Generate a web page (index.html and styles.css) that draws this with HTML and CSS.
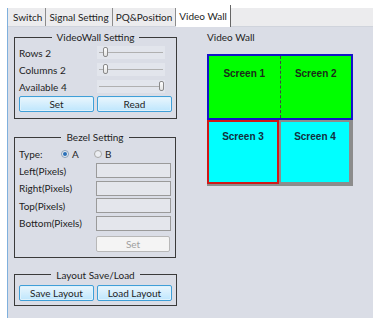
FILE: index.html
```html
<!DOCTYPE html>
<html>
<head>
<meta charset="utf-8">
<link rel="stylesheet" href="styles.css">
</head>
<body>
<div class="window">
  <div class="tabs">
    <div class="tab">Switch</div>
    <div class="tab">Signal Setting</div>
    <div class="tab">PQ&amp;Position</div>
    <div class="tab active">Video Wall</div>
  </div>
  <div class="panel">
    <div class="left">
      <fieldset class="group g1">
        <legend>VideoWall Setting</legend>
        <div class="srow"><span class="lbl">Rows 2</span><div class="slider"><div class="track"></div><div class="thumb" style="left:6px"></div></div></div>
        <div class="srow"><span class="lbl">Columns 2</span><div class="slider"><div class="track"></div><div class="thumb" style="left:6px"></div></div></div>
        <div class="srow"><span class="lbl">Available 4</span><div class="slider"><div class="track"></div><div class="thumb" style="left:62px"></div></div></div>
        <div class="btns"><button class="btn">Set</button><button class="btn">Read</button></div>
      </fieldset>
      <fieldset class="group g2">
        <legend>Bezel Setting</legend>
        <div class="typerow"><span class="tlbl">Type:</span><span class="radio on"></span><span class="rlbl">A</span><span class="radio"></span><span class="rlbl">B</span></div>
        <div class="frow"><span class="flbl">Left(Pixels)</span><span class="input"></span></div>
        <div class="frow"><span class="flbl">Right(Pixels)</span><span class="input"></span></div>
        <div class="frow"><span class="flbl">Top(Pixels)</span><span class="input"></span></div>
        <div class="frow"><span class="flbl">Bottom(Pixels)</span><span class="input"></span></div>
        <div class="frow setrow"><span class="flbl"></span><button class="btn disabled">Set</button></div>
      </fieldset>
      <fieldset class="group g3">
        <legend>Layout Save/Load</legend>
        <div class="btns"><button class="btn">Save Layout</button><button class="btn">Load Layout</button></div>
      </fieldset>
    </div>
    <div class="right">
      <div class="vwtitle">Video Wall</div>
      <div class="wall">
        <div class="rowtop">
          <div class="scr">Screen 1</div>
          <div class="divider"></div>
          <div class="scr">Screen 2</div>
        </div>
        <div class="rowbot">
          <div class="cell sel">Screen 3</div>
          <div class="cell">Screen 4</div>
        </div>
      </div>
    </div>
  </div>
</div>
</body>
</html>
```
FILE: styles.css
```css
html, body { margin: 0; padding: 0; background: #ffffff; }
body { font-family: Lato, "Open Sans", sans-serif; font-size: 10px; color: #1e1e1e; }
.window { margin: 8px 0 0 7px; width: 366px; height: 310px; border-left: 1px solid #7fb0dd; box-sizing: border-box; display: flex; flex-direction: column; }
.tabs { height: 18px; background: #ececee; display: flex; align-items: stretch; padding-left: 2px; border-bottom: 1px solid #d0d4dc; }
.tab { padding: 0 3px; line-height: 18px; border-right: 1px solid #8c8c8c; color: #1e1e1e; }
.tab.active { background: #ffffff; margin-top: -3px; line-height: 22px; height: 22px; border-right: 1px solid #666; }
.panel { flex: 1; background: #dadde6; display: flex; padding: 4px 0 0 6px; }
.left { width: 162px; display: flex; flex-direction: column; }
.group { margin: 0; border: 1px solid #3a3a3a; padding: 0 4px 4px 4px; }
.group legend { margin: 0 auto; padding: 0 5px; line-height: 12px; color: #1e1e1e; text-align: center; }
.g1 { height: 88px; box-sizing: border-box; padding-top: 1px; }
.g2 { margin-top: 12px; padding-bottom: 4px; }
.g3 { margin-top: 11px; padding-top: 3px; padding-bottom: 4px; }
.srow { display: flex; align-items: center; height: 17px; }
.lbl { width: 78px; }
.slider { position: relative; width: 68px; height: 13px; background: #e2e5ec; }
.track { position: absolute; left: 2px; right: 2px; top: 6px; height: 1px; background: #b0b0b0; }
.thumb { position: absolute; top: 1px; width: 5px; height: 10px; border: 1px solid #8a8a8a; border-radius: 2px; background: linear-gradient(#ffffff, #e2e2e2); box-sizing: border-box; }
.btns { display: flex; gap: 3px; margin-top: 1px; }
.btn { font-family: Lato, "Open Sans", sans-serif; font-size: 10px; color: #1e1e1e; width: 75px; height: 16px; padding: 0; border: 1px solid #3f9fd8; border-radius: 2px; background: linear-gradient(#eaf6fd, #bee6fd); box-shadow: inset 0 0 0 1px #dff2fc; }
.btn.disabled { border-color: #b8b8b8; background: #f4f4f4; color: #a0a0a0; box-shadow: none; width: 74px; height: 16px; }
.typerow { display: flex; align-items: center; height: 16px; margin-top: 3px; }
.tlbl { width: 42px; }
.radio { width: 8px; height: 8px; border-radius: 50%; border: 1px solid #a8a8a8; background: #eceef2; box-sizing: border-box; position: relative; }
.radio.on { border-color: #8aa0b8; }
.radio.on::after { content: ""; position: absolute; left: 1px; top: 1px; width: 4px; height: 4px; border-radius: 50%; background: #2a6fb8; }
.rlbl { margin-left: 3px; width: 22px; }
.frow { display: flex; align-items: center; height: 17.5px; }
.setrow { margin-top: 3px; }
.flbl { width: 77px; }
.input { width: 75px; height: 15px; border: 1px solid #9a9a9a; background: #e4e6ec; box-sizing: border-box; }
.g3 .btns { margin-top: 1px; }
.right { margin-left: 31px; display: flex; flex-direction: column; }
.vwtitle { margin-top: 0; line-height: 12px; }
.wall { margin-top: 11px; width: 146px; }
.rowtop { height: 66px; background: #00ff00; border: 2px solid #1414c8; box-sizing: border-box; display: flex; position: relative; font-family: "Liberation Sans", Arial, sans-serif; font-weight: bold; font-size: 10px; color: #1a2e1a; }
.scr { flex: 1; text-align: center; padding-top: 12px; }
.divider { width: 0; border-left: 1px dashed #444; }
.rowbot { display: flex; background: #8c8c8c; padding: 0 2px 2px 0; }
.cell { width: 72px; height: 64px; background: #00ffff; box-sizing: border-box; border: 2px solid #8c8c8c; text-align: center; padding-top: 9px; font-family: "Liberation Sans", Arial, sans-serif; font-weight: bold; font-size: 10px; color: #123040; }
.cell.sel { border-color: #d01818; }
```
